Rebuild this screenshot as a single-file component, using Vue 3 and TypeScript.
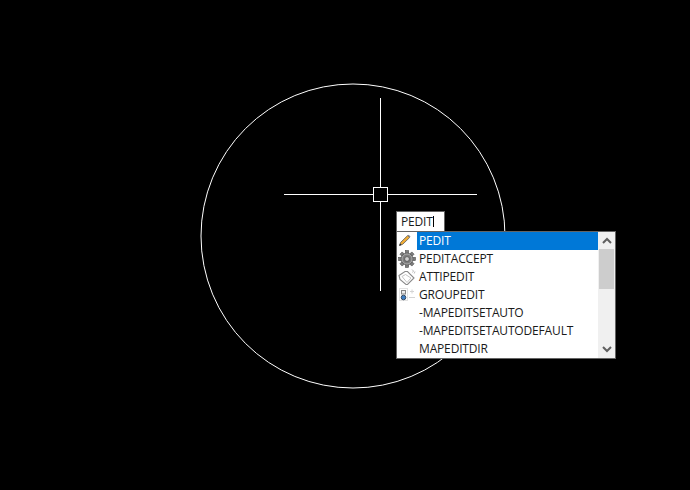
<script setup lang="ts">
const rows = ['PEDIT', 'PEDITACCEPT', 'ATTIPEDIT', 'GROUPEDIT', '-MAPEDITSETAUTO', '-MAPEDITSETAUTODEFAULT', 'MAPEDITDIR']
const teeth = [0, 45, 90, 135, 180, 225, 270, 315]
</script>

<template>
  <div class="viewport">
    <svg class="drawing" width="690" height="490" viewBox="0 0 690 490">
      <circle cx="353" cy="236" r="152" fill="none" stroke="#fff" stroke-width="1" />
      <g shape-rendering="crispEdges" stroke="#fff" fill="none">
        <path d="M284 194.5H373M388 194.5H477M380.5 98V187M380.5 202V291" />
        <rect x="373.5" y="187.5" width="14" height="14" />
      </g>
    </svg>

    <div class="input">PEDIT<span class="caret"></span></div>

    <div class="list">
      <div class="rows">
        <div v-for="(row, i) in rows" :key="row" class="row">
          <span class="icon">
            <svg v-if="i === 0" width="20" height="18" viewBox="0 0 20 18">
              <path d="M3.8 10.2 10.6 3.6 12.6 5.6 5.8 12.2 2.6 13.4z" fill="#f0ac35" stroke="#5d5d5d" stroke-width=".8" />
              <path d="M2.2 13.8l.8-2.4 1.6 1.6z" fill="#222" />
              <path d="M10.6 3.6l1-.9 1.9 1.9-.9 1z" fill="#888" />
            </svg>
            <svg v-else-if="i === 1" width="20" height="18" viewBox="0 0 20 18">
              <g fill="#7d7d7d" stroke="#4f4f4f" stroke-width=".6">
                <rect v-for="a in teeth" :key="a" x="8.4" y="0.6" width="3.2" height="3.8" :transform="`rotate(${a} 10 9)`" />
                <circle cx="10" cy="9" r="6" />
              </g>
              <circle cx="10" cy="9" r="5" fill="none" stroke="#b5b5b5" stroke-width=".8" />
              <circle cx="10" cy="9" r="2.4" fill="#cfcfcf" stroke="#444" stroke-width=".7" />
            </svg>
            <svg v-else-if="i === 2" width="20" height="18" viewBox="0 0 20 18">
              <path d="M2 7.5 8 3.5h2.5l6.5 6.500-6.500 6.500h-1.500L3 11.500z" fill="#fff" stroke="#8a8a8a" stroke-width="1.100" />
              <path d="M5 8.500 8.500 6.500l5.500 3.500-4 4.500z" fill="none" stroke="#bdbdbd" stroke-width=".9" />
              <path d="M15 1.500l1.500 1.500-1 1.500M18 3.500l-.8 2" fill="none" stroke="#a8a8a8" stroke-width=".8" />
            </svg>
            <svg v-else-if="i === 3" width="20" height="18" viewBox="0 0 20 18">
              <rect x="2.500" y="2.500" width="8" height="12" fill="none" stroke="#c4c4c4" stroke-dasharray="1 1" />
              <rect x="4.500" y="4.500" width="4" height="3.500" fill="#eee" stroke="#858585" />
              <circle cx="6.500" cy="11.500" r="2.300" fill="#3f7fc4" stroke="#2c3f55" stroke-width=".9" />
              <path d="M13 5.500h4M15 3.500v4M12 11.500h6" stroke="#d4d4d4" fill="none" />
            </svg>
          </span>
          <span class="label" :class="{ selected: i === 0 }">{{ row }}</span>
        </div>
      </div>
      <div class="scrollbar">
        <div class="arrow">
          <svg width="10" height="7" viewBox="0 0 10 7"><path d="M1 6 5 2l4 4" fill="none" stroke="#606060" stroke-width="2" /></svg>
        </div>
        <div class="track"><div class="thumb"></div></div>
        <div class="arrow">
          <svg width="10" height="7" viewBox="0 0 10 7"><path d="M1 1l4 4 4-4" fill="none" stroke="#606060" stroke-width="2" /></svg>
        </div>
      </div>
    </div>
  </div>
</template>

<style>
html, body { margin: 0; background: #000; }
</style>

<style scoped>
.viewport {
  position: relative;
  width: 690px;
  height: 490px;
  background: #000;
  overflow: hidden;
  font-family: "Open Sans", "Noto Sans", sans-serif;
  font-size: 12px;
  color: #1a1a1a;
}
.drawing { position: absolute; inset: 0; }
.input {
  position: absolute;
  left: 396px;
  top: 211px;
  width: 49px;
  height: 20px;
  box-sizing: border-box;
  border: 1px solid #646464;
  border-bottom: 0;
  background: #fff;
  padding-left: 4px;
  line-height: 18px;
  letter-spacing: -0.16px;
  display: flex;
  align-items: center;
}
.caret { width: 1px; height: 11px; margin-left: 0; background: #000; }
.list {
  position: absolute;
  left: 396px;
  top: 231px;
  width: 220px;
  height: 128px;
  box-sizing: border-box;
  border: 1px solid #646464;
  background: #fff;
  display: flex;
}
.rows { flex: 1; min-width: 0; }
.row { height: 18px; display: flex; align-items: center; }
.icon { width: 20px; height: 18px; display: block; flex: none; }
.icon svg { display: block; }
.label { flex: 1; height: 18px; line-height: 18px; padding-left: 2px; white-space: nowrap; letter-spacing: -0.16px; }
.selected { background: #0078d7; color: #fff; }
.scrollbar { width: 17px; background: #f0f0f0; display: flex; flex-direction: column; }
.arrow { height: 17px; display: flex; align-items: center; justify-content: center; flex: none; }
.track { flex: 1; padding: 0 1px; }
.thumb { height: 40px; background: #cdcdcd; }
</style>
